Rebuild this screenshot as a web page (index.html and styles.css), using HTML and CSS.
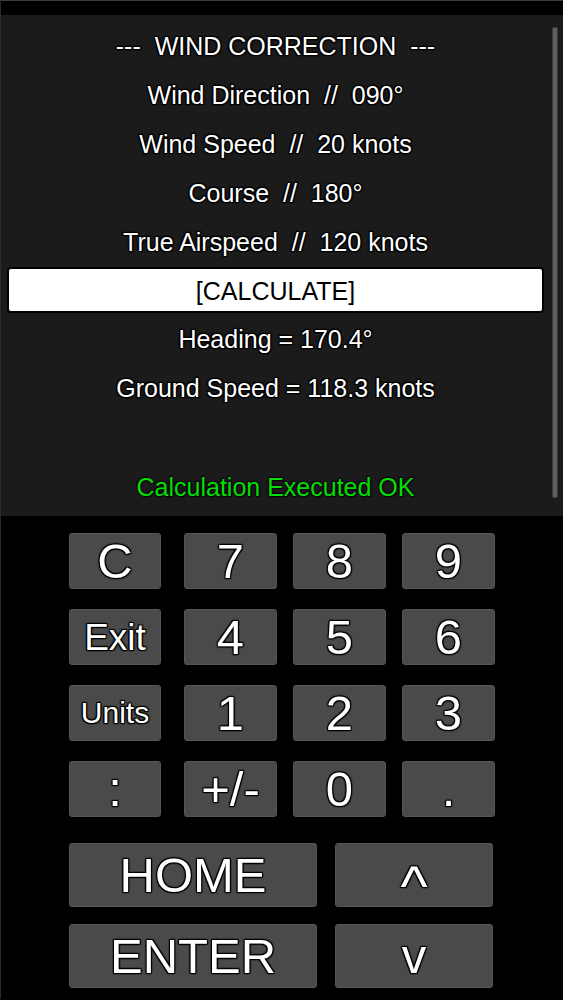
FILE: index.html
```html
<!DOCTYPE html>
<html>
<head>
<meta charset="utf-8">
<link rel="stylesheet" href="styles.css">
</head>
<body>
<div class="app">
  <div class="topbar"></div>
  <section class="panel">
    <div class="line title">---  WIND CORRECTION  ---</div>
    <div class="line">Wind Direction  //  090°</div>
    <div class="line">Wind Speed  //  20 knots</div>
    <div class="line">Course  //  180°</div>
    <div class="line">True Airspeed  //  120 knots</div>
    <div class="calc">[CALCULATE]</div>
    <div class="line result">Heading = 170.4°</div>
    <div class="line">Ground Speed = 118.3 knots</div>
    <div class="line status">Calculation Executed OK</div>
    <div class="scrollbar"></div>
  </section>
  <section class="keypad">
    <div class="keys">
      <button class="key first">C</button>
      <button class="key">7</button>
      <button class="key">8</button>
      <button class="key">9</button>
      <button class="key first small">Exit</button>
      <button class="key">4</button>
      <button class="key">5</button>
      <button class="key">6</button>
      <button class="key first smaller">Units</button>
      <button class="key">1</button>
      <button class="key">2</button>
      <button class="key">3</button>
      <button class="key first">:</button>
      <button class="key">+/-</button>
      <button class="key">0</button>
      <button class="key">.</button>
    </div>
    <div class="bigkeys">
      <button class="key big">HOME</button>
      <button class="key big arrow"><span class="caret">^</span></button>
      <button class="key big">ENTER</button>
      <button class="key big arrow">v</button>
    </div>
  </section>
</div>
</body>
</html>
```
FILE: styles.css
```css
html, body {
  margin: 0;
  padding: 0;
  background: #000;
}
body {
  width: 563px;
  height: 1000px;
  overflow: hidden;
  font-family: "Liberation Sans", Arial, sans-serif;
}
.app {
  border-left: 1px solid #2a2a2a;
  border-top: 1px solid #3a3a3a;
  height: 999px;
  box-sizing: border-box;
}
.topbar {
  height: 14px;
  background: #000;
}
.panel {
  position: relative;
  height: 501px;
  box-sizing: border-box;
  background: #1b1b1b;
  padding: 7px 20px 0 7px;
}
.line {
  height: 49px;
  line-height: 49px;
  text-align: center;
  color: #fff;
  font-size: 25px;
  white-space: pre;
  text-shadow: 0 0 2px #000, 0 0 2px #000, 1px 1px 1px #000, -1px -1px 1px #000, 1px -1px 1px #000, -1px 1px 1px #000;
}
.calc {
  margin-top: 1px;
  height: 44px;
  line-height: 44px;
  box-sizing: border-box;
  background: #fff;
  color: #000;
  font-size: 25px;
  text-align: center;
  border: 1px solid #000;
  border-radius: 3px;
  box-shadow: 0 0 0 1px #000;
}
.result {
  margin-top: 3px;
}
.status {
  margin-top: 50px;
  color: #00e000;
  text-shadow: 0 0 2px #100010, 0 0 2px #100010, 1px 1px 1px #100010, -1px -1px 1px #100010;
}
.scrollbar {
  position: absolute;
  left: 551px;
  top: 12px;
  width: 6px;
  height: 471px;
  box-sizing: border-box;
  background: #5e5e5e;
  border: 1px solid #3c3c3c;
  border-radius: 2px;
}
.keypad {
  padding: 17px 0 0 68px;
}
.keys {
  display: grid;
  grid-template-columns: 99px 93px 93px 93px;
  grid-auto-rows: 56px;
  column-gap: 16px;
  row-gap: 20px;
}
.key {
  margin: 0;
  padding: 0;
  background: #4a4a4a;
  border: 1px solid #565656;
  border-radius: 3px;
  color: #fff;
  font-family: "Liberation Sans", Arial, sans-serif;
  font-size: 49px;
  line-height: 1;
  text-shadow: 0 0 2px #000, 0 0 2px #000, 1px 1px 1px #000, -1px -1px 1px #000, 1px -1px 1px #000, -1px 1px 1px #000;
  display: flex;
  align-items: center;
  justify-content: center;
}
.key.first {
  width: 92px;
}
.key.small {
  font-size: 37px;
}
.key.smaller {
  font-size: 30px;
}
.bigkeys {
  margin-top: 26px;
  display: grid;
  grid-template-columns: 248px 158px;
  grid-auto-rows: 64px;
  column-gap: 18px;
  row-gap: 17px;
}
.key.big {
  font-size: 49px;
}
.caret {
  font-size: 58px;
  display: inline-block;
  transform: translateY(11px);
}
```
